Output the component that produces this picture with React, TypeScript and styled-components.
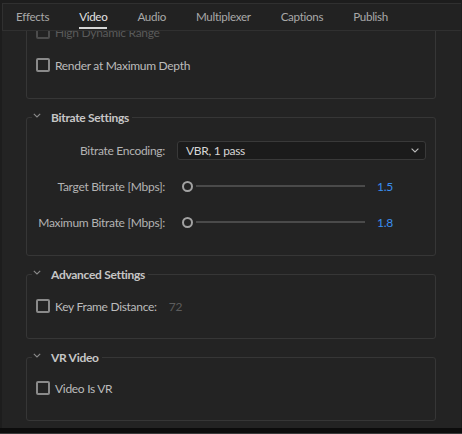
import React from "react";
import styled, { createGlobalStyle } from "styled-components";

const Global = createGlobalStyle`
  html, body { margin: 0; padding: 0; background: #1d1d1d; }
  body { font-family: Lato, "Noto Sans", sans-serif; -webkit-font-smoothing: antialiased; letter-spacing: -0.3px; }
  * { box-sizing: border-box; }
`;

const Frame = styled.div`
  width: 462px;
  height: 434px;
  display: flex;
  flex-direction: column;
  background: #1d1d1d;
  padding: 3px 1px 0 2px;
  overflow: hidden;
`;

const TabBar = styled.div`
  height: 28px;
  flex: none;
  display: flex;
  background: #222222;
  border-top: 1px solid #303030;
  border-bottom: 1px solid #303030;
  border-left: 1px solid #303030;
`;

const Tab = styled.div`
  display: flex;
  padding: 0 15px;
  &:first-child { padding-left: 13px; }
`;

const TabLabel = styled.span<{ $active?: boolean }>`
  display: flex;
  align-items: center;
  padding-top: 2px;
  margin-bottom: 1px;
  font-size: 11.6px;
  color: ${(p) => (p.$active ? "#e2e2e2" : "#a9a9a9")};
  border-bottom: 2px solid ${(p) => (p.$active ? "#d6d6d6" : "transparent")};
`;

const Content = styled.div`
  flex: 1;
  overflow: hidden;
  background: #232323;
  padding: 0 25px 0 24px;
  display: flex;
  flex-direction: column;
  gap: 9px;
`;

const Section = styled.fieldset<{ $scrolled?: boolean }>`
  margin: ${(p) => (p.$scrolled ? "-23px 0 0 0" : "0")};
  border: 1px solid #363636;
  border-radius: 3px;
  padding: ${(p) => (p.$scrolled ? "13px 9px 23px 9px" : "13px 9px 22px 9px")};
  display: flex;
  flex-direction: column;
  gap: 13px;
  min-width: 0;
`;

const Legend = styled.legend`
  margin-left: -4px;
  padding: 0 3px 0 1px;
  height: 18px;
  display: flex;
  align-items: center;
  gap: 10px;
  font-size: 12px;
  font-weight: 700;
  color: #c6c6c6;
`;

const Chevron = () => (
  <svg width="8" height="5" viewBox="0 0 8 5" style={{ marginTop: -3 }}>
    <path d="M0.8 0.8 L4 4 L7.2 0.8" fill="none" stroke="#8c8c8c" strokeWidth="1.1" />
  </svg>
);

const CheckRow = styled.label<{ $disabled?: boolean }>`
  height: 20px;
  display: flex;
  align-items: center;
  gap: 5px;
  font-size: 12px;
  color: ${(p) => (p.$disabled ? "#5a5a5a" : "#bcbcbc")};
`;

const Box = styled.span<{ $disabled?: boolean }>`
  width: 14px;
  height: 14px;
  flex: none;
  border: 2px solid ${(p) => (p.$disabled ? "#4c4c4c" : "#8a8a8a")};
  border-radius: 2px;
`;

const DimValue = styled.span`
  margin-left: 7px;
  color: #5c5c5c;
`;

const Grid = styled.div`
  display: grid;
  grid-template-columns: 129px 1fr;
  column-gap: 12px;
  row-gap: 16px;
  align-items: center;
  padding-top: 1px;
`;

const FieldLabel = styled.span`
  text-align: right;
  font-size: 12px;
  color: #b3b3b3;
  white-space: nowrap;
`;

const Select = styled.div`
  height: 19px;
  display: flex;
  align-items: center;
  justify-content: space-between;
  padding: 0 6px 0 8px;
  background: #1b1b1b;
  border: 1px solid #393939;
  border-radius: 3px;
  font-size: 12px;
  color: #d6d6d6;
`;

const SliderRow = styled.div`
  height: 20px;
  display: flex;
  align-items: center;
`;

const Knob = styled.span`
  width: 11px;
  height: 11px;
  margin-left: 5px;
  flex: none;
  border: 2px solid #a2a2a2;
  border-radius: 50%;
`;

const Track = styled.span`
  width: 169px;
  height: 2px;
  margin-left: 3px;
  background: #4a4a4a;
  flex: none;
`;

const Value = styled.span`
  margin-left: 12px;
  font-size: 12px;
  color: #3a8ef0;
`;

const BottomBar = styled.div`
  height: 6px;
  flex: none;
  margin-left: -2px;
  margin-right: -1px;
  background: #0c0c0c;
  border-bottom: 1px solid #3a3a3a;
`;

const tabs = ["Effects", "Video", "Audio", "Multiplexer", "Captions", "Publish"];

const Check = ({ label, disabled, extra }: { label: string; disabled?: boolean; extra?: string }) => (
  <CheckRow $disabled={disabled}>
    <Box $disabled={disabled} />
    <span>{label}</span>
    {extra && <DimValue>{extra}</DimValue>}
  </CheckRow>
);

export default function App() {
  return (
    <>
      <Global />
      <Frame>
        <TabBar>
          {tabs.map((t) => (
            <Tab key={t}>
              <TabLabel $active={t === "Video"}>{t}</TabLabel>
            </Tab>
          ))}
        </TabBar>
        <Content>
          <Section $scrolled>
            <Check label="High Dynamic Range" disabled />
            <Check label="Render at Maximum Depth" />
          </Section>
          <Section style={{ paddingTop: 14, paddingBottom: 23 }}>
            <Legend>
              <Chevron />
              Bitrate Settings
            </Legend>
            <Grid>
              <FieldLabel>Bitrate Encoding:</FieldLabel>
              <Select>
                <span>VBR, 1 pass</span>
                <svg width="8" height="5" viewBox="0 0 8 5">
                  <path d="M0.6 0.6 L4 4 L7.4 0.6" fill="none" stroke="#bdbdbd" strokeWidth="1.1" />
                </svg>
              </Select>
              <FieldLabel>Target Bitrate [Mbps]:</FieldLabel>
              <SliderRow>
                <Knob />
                <Track />
                <Value>1.5</Value>
              </SliderRow>
              <FieldLabel>Maximum Bitrate [Mbps]:</FieldLabel>
              <SliderRow>
                <Knob />
                <Track />
                <Value>1.8</Value>
              </SliderRow>
            </Grid>
          </Section>
          <Section>
            <Legend>
              <Chevron />
              Advanced Settings
            </Legend>
            <Check label="Key Frame Distance:" extra="72" />
          </Section>
          <Section style={{ paddingTop: 12 }}>
            <Legend>
              <Chevron />
              VR Video
            </Legend>
            <Check label="Video Is VR" />
          </Section>
        </Content>
        <BottomBar />
      </Frame>
    </>
  );
}
